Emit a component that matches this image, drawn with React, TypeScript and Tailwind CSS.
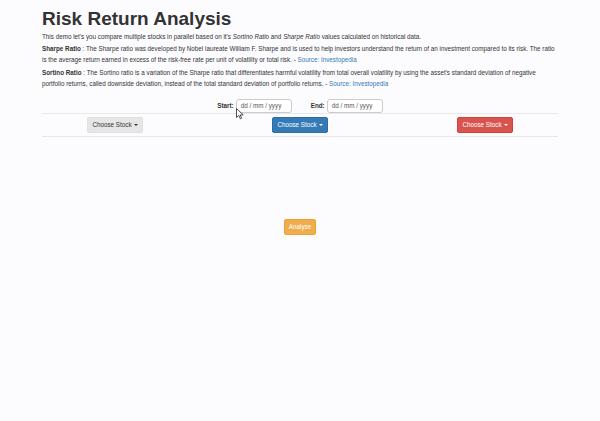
import React from "react";

function Caret() {
  return <span className="inline-block ml-[2px] align-middle w-0 h-0 border-l-[2px] border-r-[2px] border-t-[2px] border-l-transparent border-r-transparent border-t-current" />;
}

export default function App() {
  return (
    <div className="relative w-[600px] h-[421px] bg-[#fcfbfd] text-[#333] overflow-hidden" style={{ fontFamily: '"Liberation Sans", Arial, sans-serif' }}>
      <div className="px-[42px] pt-[7px]">
        <h1 className="text-[19px] leading-[24px] font-bold">Risk Return Analysis</h1>
        <p className="text-[6.3px] leading-[11px]">
          This demo let's you compare multiple stocks in parallel based on it's <i>Sortino Ratio</i> and <i>Sharpe Ratio</i> values calculated on historical data.
        </p>
        <p className="mt-[1px] text-[6.3px] leading-[11px]">
          <b>Sharpe Ratio</b> : The Sharpe ratio was developed by Nobel laureate William F. Sharpe and is used to help investors understand the return of an investment compared to its risk. The ratio is the average return earned in excess of the risk-free rate per unit of volatility or total risk. - <span className="text-[#337ab7]">Source: Investopedia</span>
        </p>
        <p className="mt-[2px] text-[6.3px] leading-[11px]">
          <b>Sortino Ratio</b> : The Sortino ratio is a variation of the Sharpe ratio that differentiates harmful volatility from total overall volatility by using the asset's standard deviation of negative portfolio returns, called downside deviation, instead of the total standard deviation of portfolio returns. - <span className="text-[#337ab7]">Source: Investopedia</span>
        </p>
        <div className="mt-[10px] flex justify-center items-center text-[6.3px] h-[14px]">
          <b className="mr-[2px]">Start:</b>
          <div className="w-[56px] h-[14px] border border-[#ccc] rounded-[3px] bg-white flex items-center pl-[4px] text-[#555]">dd / mm / yyyy</div>
          <b className="ml-[19px] mr-[2px]">End:</b>
          <div className="w-[56px] h-[14px] border border-[#ccc] rounded-[3px] bg-white flex items-center pl-[4px] text-[#555]">dd / mm / yyyy</div>
        </div>
        <div className="border-t border-[#e8e8ea]" />
        <div className="flex justify-center">
          <div className="grid grid-cols-[185px_185px_185px] h-[22px] items-center">
            <div className="flex justify-center">
              <button className="h-[16px] px-[4px] rounded-[2px] bg-[#e6e6e6] border border-[#e0e0e0] text-[6.3px] text-[#333] flex items-center">Choose Stock<Caret /></button>
            </div>
            <div className="flex justify-center">
              <button className="h-[16px] px-[4px] rounded-[2px] bg-[#337ab7] border border-[#2e6da4] text-[6.3px] text-white flex items-center">Choose Stock<Caret /></button>
            </div>
            <div className="flex justify-center">
              <button className="h-[16px] px-[4px] rounded-[2px] bg-[#d9534f] border border-[#d43f3a] text-[6.3px] text-white flex items-center">Choose Stock<Caret /></button>
            </div>
          </div>
        </div>
        <div className="border-t border-[#e8e8ea]" />
        <div className="mt-[82px] flex justify-center">
          <button className="h-[16px] px-[4px] rounded-[2px] bg-[#f0ad4e] border border-[#eea236] text-[6.3px] text-white">Analyse</button>
        </div>
      </div>
      <svg className="absolute left-[236px] top-[108px]" width="8" height="12" viewBox="0 0 8 12">
        <path d="M0.5 0.5 L0.5 9.5 L2.8 7.4 L4.3 10.8 L5.6 10.2 L4.2 6.9 L7.2 6.9 Z" fill="white" stroke="#222" strokeWidth="0.8" />
      </svg>
    </div>
  );
}
